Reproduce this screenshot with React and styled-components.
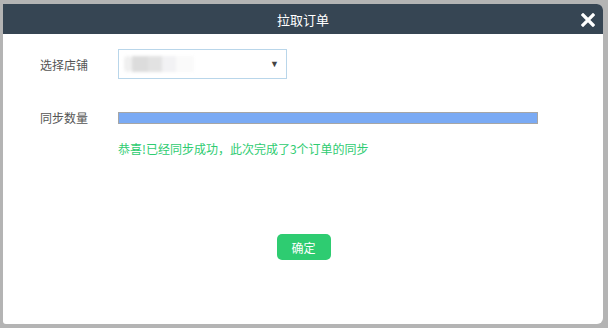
import styled, { createGlobalStyle } from "styled-components";

const GlobalStyle = createGlobalStyle`
  html, body {
    margin: 0;
    padding: 0;
    background: #b4b4b4;
    font-family: "Liberation Sans", "Noto Sans CJK SC", sans-serif;
  }
`;

const Backdrop = styled.div`
  width: 608px;
  height: 328px;
  box-sizing: border-box;
  padding: 4px 5px 4px 3px;
  display: flex;
  background: #b4b4b4;
`;

const Modal = styled.div`
  flex: 1;
  display: flex;
  flex-direction: column;
  background: #fff;
  border-radius: 0 6px 6px 3px;
  overflow: hidden;
`;

const Header = styled.div`
  position: relative;
  height: 30px;
  display: flex;
  align-items: center;
  justify-content: center;
  background: #364553;
  color: #fff;
  font-size: 13px;
  font-family: "Noto Sans CJK SC", sans-serif;
`;

const Close = styled.button`
  position: absolute;
  right: 8px;
  top: 9px;
  width: 14px;
  height: 14px;
  padding: 0;
  border: 0;
  background: none;
  cursor: pointer;
  display: flex;
`;

const Body = styled.div`
  flex: 1;
  display: flex;
  flex-direction: column;
  padding: 15px 0 0 37px;
`;

const Row = styled.div`
  display: grid;
  grid-template-columns: 78px 1fr;
  align-items: center;
  margin-bottom: ${(p) => p.$gap || 0}px;
`;

const Label = styled.span`
  font-size: 12px;
  color: #555;
  font-family: "Noto Sans CJK SC", sans-serif;
`;

const Select = styled.div`
  height: 28px;
  border: 1px solid #b9d6ea;
  display: flex;
  align-items: center;
  justify-content: space-between;
  padding: 0 7px 0 5px;
  box-sizing: content-box;
  width: 155px;
`;

const Blur = styled.div`
  display: flex;
  align-items: center;
  filter: blur(1.8px);
`;

const Blob = styled.span`
  width: ${(p) => p.$w}px;
  height: 16px;
  background: ${(p) => p.$c};
  border-radius: ${(p) => p.$r || 0}px;
`;

const Arrow = styled.span`
  font-size: 9px;
  color: #444;
  line-height: 1;
`;

const Progress = styled.div`
  width: 418px;
  height: 10px;
  border: 1px solid #a6a6a6;
  background: #7aaaf4;
`;

const Message = styled.div`
  margin: 14px 0 0 78px;
  font-size: 12px;
  color: #2ecc71;
  font-family: "Noto Sans CJK SC", sans-serif;
`;

const Footer = styled.div`
  display: flex;
  justify-content: center;
  margin-top: 77px;
  padding-right: 37px;
`;

const Button = styled.button`
  width: 54px;
  height: 26px;
  border: 0;
  border-radius: 5px;
  background: #2ecc71;
  color: #fff;
  font-size: 12px;
  font-family: "Noto Sans CJK SC", sans-serif;
  padding: 0;
  margin-left: 1px;
  cursor: pointer;
`;

export default function App() {
  return (
    <>
      <GlobalStyle />
      <Backdrop>
        <Modal>
          <Header>
            拉取订单
            <Close aria-label="close">
              <svg width="14" height="14" viewBox="0 0 14 14">
                <path
                  d="M2 2 L12 12 M12 2 L2 12"
                  stroke="#fff"
                  strokeWidth="3.2"
                  strokeLinecap="square"
                />
              </svg>
            </Close>
          </Header>
          <Body>
            <Row $gap={30}>
              <Label>选择店铺</Label>
              <Select>
                <Blur>
                  <Blob $w={8} $c="#f0f0f0" $r={8} />
                  <Blob $w={16} $c="#dcdcdc" />
                  <Blob $w={14} $c="#e2e2e2" />
                  <Blob $w={14} $c="#f2f2f4" />
                  <Blob $w={18} $c="#fafafa" />
                </Blur>
                <Arrow>▼</Arrow>
              </Select>
            </Row>
            <Row>
              <Label>同步数量</Label>
              <Progress />
            </Row>
            <Message>恭喜!已经同步成功，此次完成了3个订单的同步</Message>
            <Footer>
              <Button>确定</Button>
            </Footer>
          </Body>
        </Modal>
      </Backdrop>
    </>
  );
}
